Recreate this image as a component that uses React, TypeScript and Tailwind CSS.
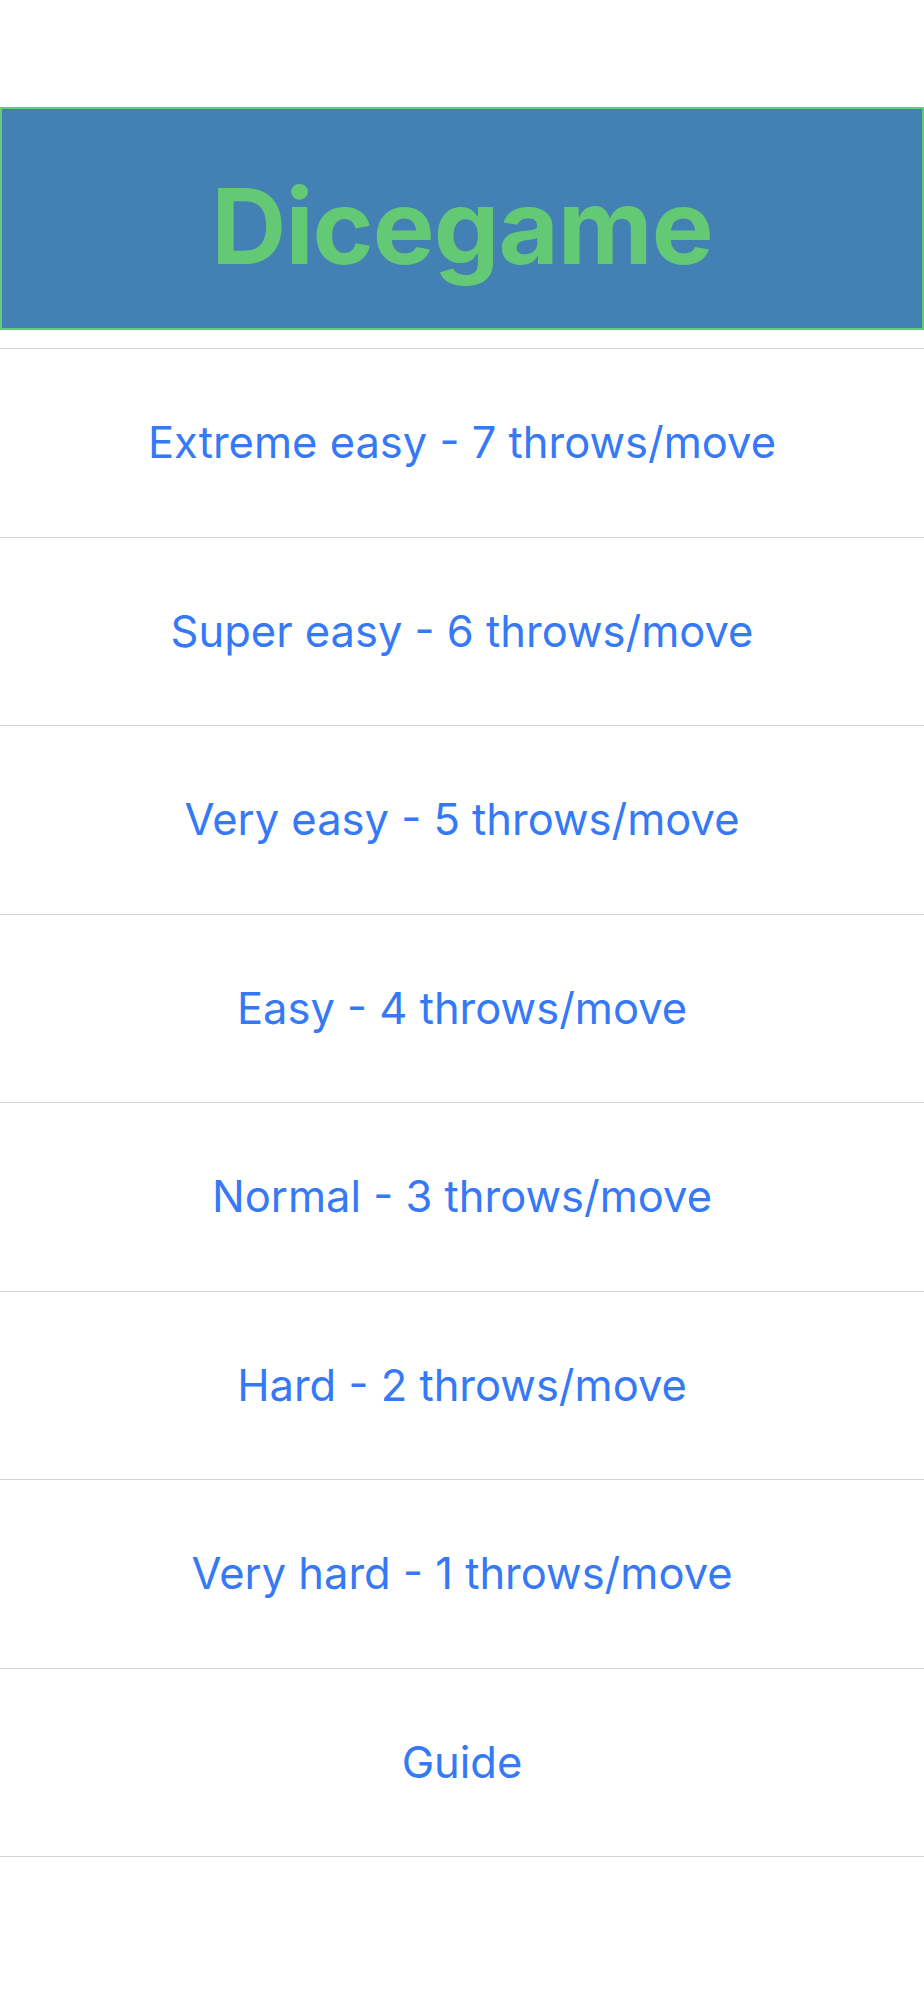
const levels = [
  "Extreme easy - 7 throws/move",
  "Super easy - 6 throws/move",
  "Very easy - 5 throws/move",
  "Easy - 4 throws/move",
  "Normal - 3 throws/move",
  "Hard - 2 throws/move",
  "Very hard - 1 throws/move",
  "Guide",
];

export default function App() {
  return (
    <div className="min-h-[2000px] w-full bg-white pt-[107px]" style={{ fontFamily: "Inter, 'Liberation Sans', sans-serif" }}>
      {/* Title */}
      <div className="flex h-[223px] items-center justify-center border-2 border-[#66cb78] bg-[#4380b4]">
        <h1 className="mt-[14px] text-[104px] font-bold leading-none tracking-[-1px] text-[#64c975]">Dicegame</h1>
      </div>

      <div className="mt-[18px] border-t border-[#d2d2d2]">
        {levels.map((label) => (
          <button
            key={label}
            className="flex h-[188.5px] w-full items-center justify-center border-b border-[#d2d2d2] text-[43.5px] text-[#3579f6]"
          >
            {label}
          </button>
        ))}
      </div>
    </div>
  );
}
